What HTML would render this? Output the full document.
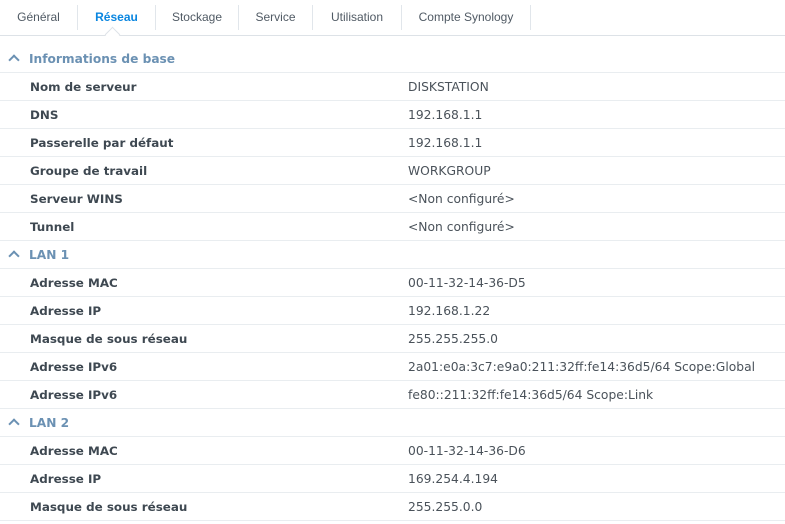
<!DOCTYPE html><html><head><meta charset="utf-8"><style>
body{margin:0;width:785px;height:524px;background:#fff;font-family:"Liberation Sans",sans-serif;overflow:hidden;position:relative}
.tabs{position:absolute;left:0;top:0;width:785px;height:35px;border-bottom:1px solid #dde2e7}
.tab{position:absolute;top:5px;height:25px;line-height:25px;font-size:12px;color:#505a64;text-align:center;border-right:1px solid #e1e6eb}
.tab.a{color:#0a86e0;font-weight:bold}
.notch{position:absolute;left:107px;top:29px;width:10px;height:10px;background:#fff;border-left:1px solid #dde2e7;border-top:1px solid #dde2e7;transform:rotate(45deg)}
.r{position:absolute;left:0;width:785px;height:28px;border-bottom:1px solid #e9edf0;font-size:12.3px;font-family:"DejaVu Sans",sans-serif}
.r b{position:absolute;left:30px;top:8px;color:#3e4851;font-size:11.9px}
.r span{position:absolute;left:408px;top:8px;color:#4a525a}
.h b{left:29px;color:#6b91b3;font-size:12.2px}
.h i{position:absolute;left:10px;top:12px;width:6px;height:6px;border-left:2px solid #6b91b3;border-top:2px solid #6b91b3;transform:rotate(45deg)}
</style></head><body>
<div class="tabs">
<div class="tab" style="left:0;width:77px">Général</div>
<div class="tab a" style="left:78px;width:77px">Réseau</div>
<div class="tab" style="left:156px;width:82px">Stockage</div>
<div class="tab" style="left:239px;width:73px">Service</div>
<div class="tab" style="left:313px;width:88px">Utilisation</div>
<div class="tab" style="left:402px;width:128px">Compte Synology</div>
<div class="notch"></div>
</div>
<div class="r h" style="top:44px"><i></i><b>Informations de base</b></div>
<div class="r" style="top:72px"><b>Nom de serveur</b><span>DISKSTATION</span></div>
<div class="r" style="top:100px"><b>DNS</b><span>192.168.1.1</span></div>
<div class="r" style="top:128px"><b>Passerelle par défaut</b><span>192.168.1.1</span></div>
<div class="r" style="top:156px"><b>Groupe de travail</b><span>WORKGROUP</span></div>
<div class="r" style="top:184px"><b>Serveur WINS</b><span>&lt;Non configuré&gt;</span></div>
<div class="r" style="top:212px"><b>Tunnel</b><span>&lt;Non configuré&gt;</span></div>
<div class="r h" style="top:240px"><i></i><b>LAN 1</b></div>
<div class="r" style="top:268px"><b>Adresse MAC</b><span>00-11-32-14-36-D5</span></div>
<div class="r" style="top:296px"><b>Adresse IP</b><span>192.168.1.22</span></div>
<div class="r" style="top:324px"><b>Masque de sous réseau</b><span>255.255.255.0</span></div>
<div class="r" style="top:352px"><b>Adresse IPv6</b><span>2a01:e0a:3c7:e9a0:211:32ff:fe14:36d5/64 Scope:Global</span></div>
<div class="r" style="top:380px"><b>Adresse IPv6</b><span>fe80::211:32ff:fe14:36d5/64 Scope:Link</span></div>
<div class="r h" style="top:408px"><i></i><b>LAN 2</b></div>
<div class="r" style="top:436px"><b>Adresse MAC</b><span>00-11-32-14-36-D6</span></div>
<div class="r" style="top:464px"><b>Adresse IP</b><span>169.254.4.194</span></div>
<div class="r" style="top:492px"><b>Masque de sous réseau</b><span>255.255.0.0</span></div>
</body></html>
